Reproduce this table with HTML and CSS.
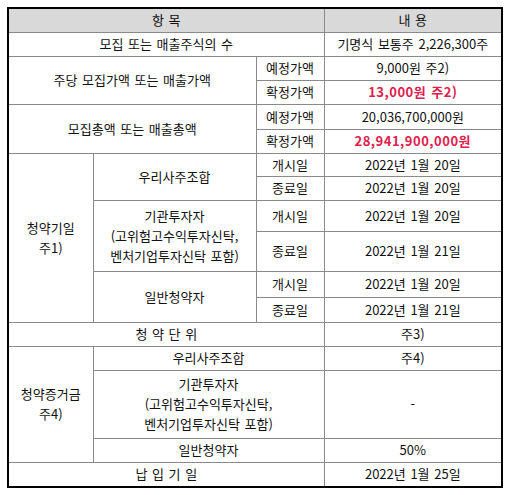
FILE: index.html
```html
<!DOCTYPE html>
<html lang="ko">
<head>
<meta charset="utf-8">
<link rel="stylesheet" href="styles.css">
</head>
<body>
<div class="frame">
<table class="grid">
<colgroup><col class="c1"><col class="c2"><col class="c3"><col class="c4"></colgroup>
<tr class="h23 head"><td colspan="3">항 목</td><td>내 용</td></tr>
<tr class="h24"><td colspan="3">모집 또는 매출주식의 수</td><td>기명식 보통주 2,226,300주</td></tr>
<tr class="h24"><td colspan="2" rowspan="2">주당 모집가액 또는 매출가액</td><td>예정가액</td><td>9,000원 주2)</td></tr>
<tr class="h24"><td>확정가액</td><td class="red">13,000원 주2)</td></tr>
<tr class="h25"><td colspan="2" rowspan="2">모집총액 또는 매출총액</td><td>예정가액</td><td>20,036,700,000원</td></tr>
<tr class="h24"><td>확정가액</td><td class="red">28,941,900,000원</td></tr>
<tr class="h23"><td rowspan="6">청약기일<br>주1)</td><td rowspan="2">우리사주조합</td><td>개시일</td><td>2022년 1월 20일</td></tr>
<tr class="h24"><td>종료일</td><td>2022년 1월 20일</td></tr>
<tr class="h31"><td rowspan="2">기관투자자<br>(고위험고수익투자신탁,<br>벤처기업투자신탁 포함)</td><td>개시일</td><td>2022년 1월 20일</td></tr>
<tr class="h40"><td>종료일</td><td>2022년 1월 21일</td></tr>
<tr class="h26"><td rowspan="2">일반청약자</td><td>개시일</td><td>2022년 1월 20일</td></tr>
<tr class="h25"><td>종료일</td><td>2022년 1월 21일</td></tr>
<tr class="h24"><td colspan="3">청 약 단 위</td><td>주3)</td></tr>
<tr class="h24"><td rowspan="3">청약증거금<br>주4)</td><td colspan="2">우리사주조합</td><td>주4)</td></tr>
<tr class="h68"><td colspan="2">기관투자자<br>(고위험고수익투자신탁,<br>벤처기업투자신탁 포함)</td><td>-</td></tr>
<tr class="h24"><td colspan="2">일반청약자</td><td>50%</td></tr>
<tr class="h24"><td colspan="3">납 입 기 일</td><td>2022년 1월 25일</td></tr>
</table>
</div>
</body>
</html>
```

FILE: styles.css
```css
html, body {
  margin: 0;
  padding: 0;
  background: #ffffff;
}
body {
  padding: 7px;
}
.frame {
  width: 492px;
  border: 2px solid #000000;
}
.grid {
  width: 492px;
  table-layout: fixed;
  border-collapse: collapse;
  border-style: hidden;
  font-family: "Noto Sans CJK KR", "Noto Sans", sans-serif;
  font-size: 13px;
  line-height: 20px;
  color: #111111;
  word-spacing: 1px;
}
.c1 { width: 84px; }
.c2 { width: 163px; }
.c3 { width: 68px; }
.c4 { width: 177px; }
.grid td {
  border: 1px solid #8a8a8a;
  padding: 0 2px;
  text-align: center;
  vertical-align: middle;
  white-space: nowrap;
}
.head td {
  background: #d9d9d9;
}
.red {
  color: #e0204c;
  font-weight: bold;
  letter-spacing: 0.5px;
}
.h23 { height: 23px; }
.h24 { height: 24px; }
.h25 { height: 25px; }
.h26 { height: 26px; }
.h31 { height: 31px; }
.h40 { height: 40px; }
.h68 { height: 68px; }
```
